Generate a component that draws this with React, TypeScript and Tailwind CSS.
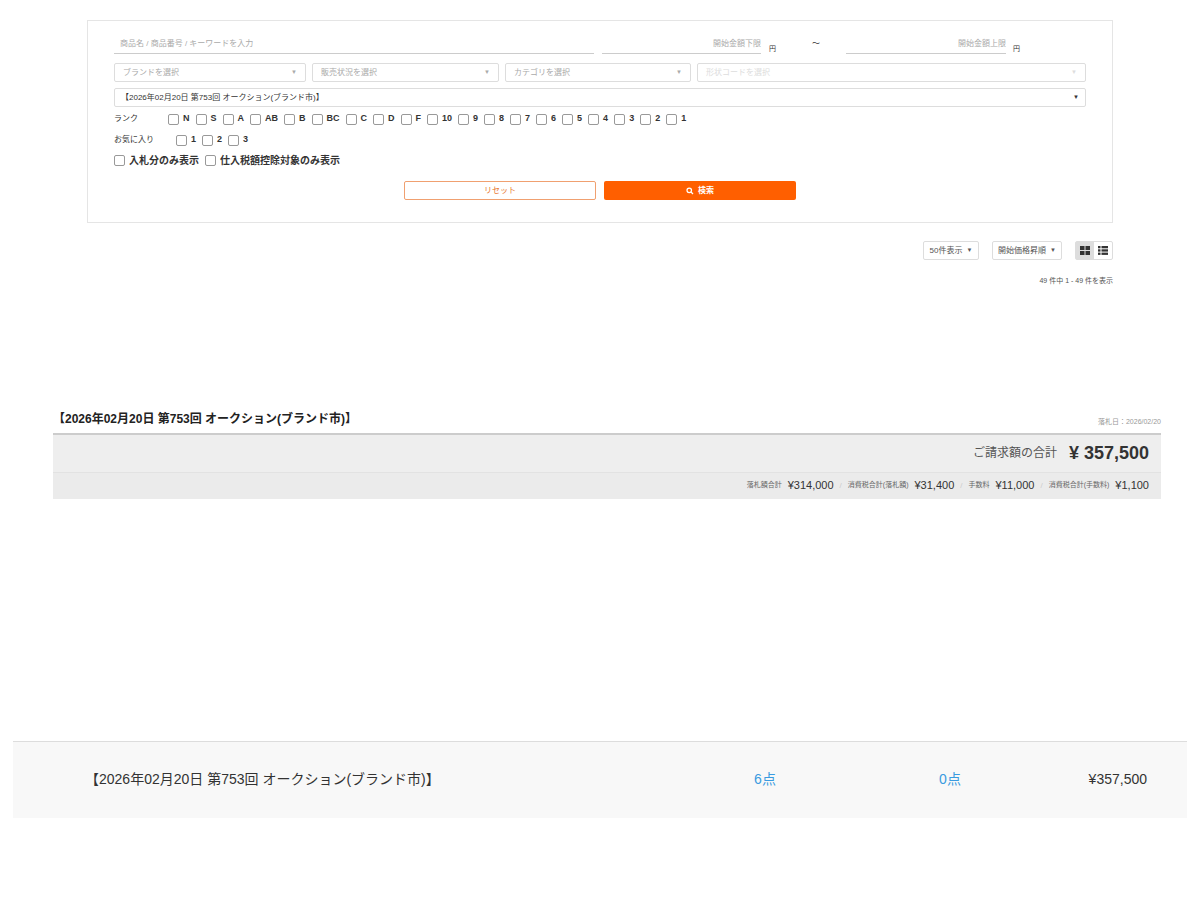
const F = { fontFamily: '"Liberation Sans", "Noto Sans CJK JP", sans-serif' };
const ranks = ["N","S","A","AB","B","BC","C","D","F","10","9","8","7","6","5","4","3","2","1"];

function Box({ label, big }: { label: string; big?: boolean }) {
  return (
    <label className={"flex items-center gap-1 font-bold text-[#333] " + (big ? "text-[10px]" : "text-[9px]")}>
      <span className="w-[11px] h-[11px] border border-[#999] rounded-[2px] bg-white inline-block" />
      {label}
    </label>
  );
}

function Sel({ text, w, dim }: { text: string; w: string; dim?: boolean }) {
  return (
    <div className={"h-[19px] border border-[#ddd] rounded-[2px] flex items-center justify-between px-2 text-[8px] " + w + (dim ? " text-[#ddd]" : " text-[#aaa]")}>
      <span>{text}</span><span className="text-[6px]">▼</span>
    </div>
  );
}

export default function App() {
  return (
    <div style={F} className="w-[1200px] h-[900px] bg-white relative">
      <div className="pt-[20px] px-[87px]">
        <div className="border border-[#e5e5e5] h-[203px] px-[26px] pt-[15px]">
          <div className="flex items-end h-[18px] text-[8px] text-[#aaa]">
            <div className="w-[480px] border-b border-[#ccc] pb-[3px] pl-[6px]">商品名 / 商品番号 / キーワードを入力</div>
            <div className="ml-[8px] w-[159px] border-b border-[#ccc] pb-[3px] text-right">開始金額下限</div>
            <span className="text-[#333] ml-[8px] text-[7px]">円</span>
            <span className="ml-[36px] mb-[4px] text-[#333]">〜</span>
            <div className="ml-[26px] w-[160px] border-b border-[#ccc] pb-[3px] text-right">開始金額上限</div>
            <span className="text-[#333] ml-[7px] text-[7px]">円</span>
          </div>
          <div className="flex gap-[6px] mt-[9px]">
            <Sel text="ブランドを選択" w="w-[192px]" />
            <Sel text="販売状況を選択" w="w-[187px]" />
            <Sel text="カテゴリを選択" w="w-[186px]" />
            <Sel text="形状コードを選択" w="flex-1" dim />
          </div>
          <div className="mt-[6px] h-[19px] border border-[#ddd] rounded-[2px] flex items-center justify-between px-[6px] text-[8px] text-[#333]">
            <span>【2026年02月20日 第753回 オークション(ブランド市)】</span><span className="text-[6px]">▼</span>
          </div>
          <div className="flex items-center mt-[6px] h-[12px]">
            <span className="text-[8px] text-[#333] w-[54px]">ランク</span>
            <div className="flex gap-[6px]">{ranks.map(r => <Box key={r} label={r} />)}</div>
          </div>
          <div className="flex items-center mt-[9px] h-[12px]">
            <span className="text-[8px] text-[#333] w-[62px]">お気に入り</span>
            <div className="flex gap-[6px]">{["1","2","3"].map(r => <Box key={r} label={r} />)}</div>
          </div>
          <div className="flex items-center gap-[6px] mt-[8px] h-[12px]">
            <Box label="入札分のみ表示" big /><Box label="仕入税額控除対象のみ表示" big />
          </div>
          <div className="flex justify-center gap-[8px] mt-[15px]">
            <div className="w-[192px] h-[19px] border border-[#f0a070] rounded-[2px] text-[8px] text-[#e8772e] flex items-center justify-center">リセット</div>
            <div className="w-[192px] h-[19px] bg-[#ff5f00] rounded-[2px] text-[8px] text-white font-bold flex items-center justify-center gap-1">
              <svg width="8" height="8" viewBox="0 0 16 16"><circle cx="6.5" cy="6.5" r="4.5" stroke="white" strokeWidth="2.5" fill="none"/><path d="M10 10l4 4" stroke="white" strokeWidth="2.5"/></svg>検索
            </div>
          </div>
        </div>
        <div className="flex justify-end items-center mt-[18px] text-[8px] text-[#555] gap-[13px]">
          <div className="h-[19px] w-[56px] border border-[#ddd] rounded-[2px] flex items-center justify-center gap-1">50件表示 <span className="text-[6px]">▼</span></div>
          <div className="h-[19px] w-[70px] border border-[#ddd] rounded-[2px] flex items-center justify-center gap-1">開始価格昇順 <span className="text-[6px]">▼</span></div>
          <div className="flex border border-[#ddd] rounded-[2px]">
            <div className="w-[18px] h-[17px] bg-[#ddd] flex items-center justify-center">
              <svg width="10" height="9" viewBox="0 0 10 9" fill="#333"><rect x="0" y="0" width="4.5" height="4"/><rect x="5.5" y="0" width="4.5" height="4"/><rect x="0" y="5" width="4.5" height="4"/><rect x="5.5" y="5" width="4.5" height="4"/></svg>
            </div>
            <div className="w-[18px] h-[17px] flex items-center justify-center">
              <svg width="10" height="9" viewBox="0 0 10 9" fill="#333"><rect x="0" y="0" width="2.5" height="2.3"/><rect x="3.5" y="0" width="6.5" height="2.3"/><rect x="0" y="3.3" width="2.5" height="2.3"/><rect x="3.5" y="3.3" width="6.5" height="2.3"/><rect x="0" y="6.6" width="2.5" height="2.3"/><rect x="3.5" y="6.6" width="6.5" height="2.3"/></svg>
            </div>
          </div>
        </div>
        <div className="text-right text-[7px] text-[#555] mt-[16px]">49 件中 1 - 49 件を表示</div>
      </div>

      <div className="mx-[53px] w-[1108px] mt-[123px]">
        <div className="flex justify-between items-end pb-[5px]">
          <span className="text-[12px] font-bold text-[#222]">【2026年02月20日 第753回 オークション(ブランド市)】</span>
          <span className="text-[7px] text-[#999]">落札日：2026/02/20</span>
        </div>
        <div className="border-t-2 border-[#ccc] bg-[#eee]">
          <div className="h-[38px] flex items-center justify-end pr-[12px] gap-3 border-b border-[#e2e2e2]">
            <span className="text-[12px] text-[#555]">ご請求額の合計</span>
            <span className="text-[18px] font-bold text-[#333]">¥ 357,500</span>
          </div>
          <div className="h-[26px] flex items-center justify-end pr-[12px] gap-[6px] text-[#333] bg-[#ebebeb]">
            <span className="text-[7px] text-[#666]">落札額合計</span><span className="text-[11px]">¥314,000</span><span className="text-[8px] text-[#ccc]">/</span>
            <span className="text-[7px] text-[#666]">消費税合計(落札額)</span><span className="text-[11px]">¥31,400</span><span className="text-[8px] text-[#ccc]">/</span>
            <span className="text-[7px] text-[#666]">手数料</span><span className="text-[11px]">¥11,000</span><span className="text-[8px] text-[#ccc]">/</span>
            <span className="text-[7px] text-[#666]">消費税合計(手数料)</span><span className="text-[11px]">¥1,100</span>
          </div>
        </div>
      </div>

      <div className="mx-[13px] mt-[242px] h-[77px] bg-[#f8f8f8] border-t border-[#ddd] flex items-center text-[14px] text-[#333]">
        <span className="ml-[72px] w-[620px]">【2026年02月20日 第753回 オークション(ブランド市)】</span>
        <span className="w-[120px] text-center text-[#3a9be0]">6点</span>
        <span className="ml-[65px] w-[120px] text-center text-[#3a9be0]">0点</span>
        <span className="flex-1 text-right pr-[40px]">¥357,500</span>
      </div>
    </div>
  );
}
